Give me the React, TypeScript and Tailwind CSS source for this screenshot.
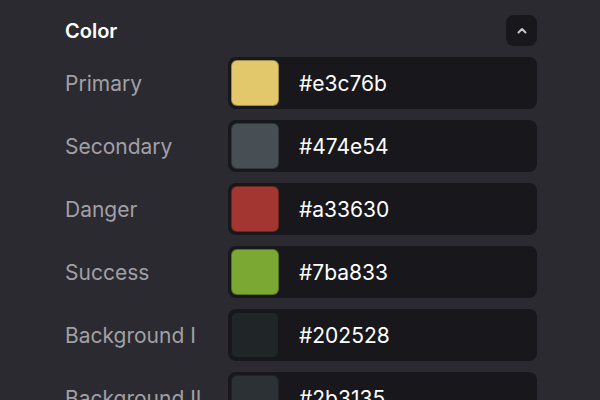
import React from "react";

const rows = [
  { label: "Primary", hex: "#e3c76b" },
  { label: "Secondary", hex: "#474e54" },
  { label: "Danger", hex: "#a33630" },
  { label: "Success", hex: "#7ba833" },
  { label: "Background I", hex: "#202528" },
  { label: "Background II", hex: "#2b3135" },
];

export default function App() {
  return (
    <div
      className="w-[600px] h-[400px] overflow-hidden bg-[#2b2a30] pl-[65px] pr-[63px] pt-[15px]"
      style={{ fontFamily: "Inter, 'Noto Sans', sans-serif" }}
    >
      <div className="flex items-center justify-between h-[31px]">
        <span className="text-[20px] font-semibold text-white">Color</span>
        <button className="w-[31px] h-[31px] rounded-[8px] bg-[#18171c] flex items-center justify-center">
          <svg width="10" height="7" viewBox="0 0 10 7" fill="none">
            <path d="M1.5 5.5 L5 2 L8.5 5.5" stroke="#c8c8cc" strokeWidth="2" strokeLinecap="round" strokeLinejoin="round" />
          </svg>
        </button>
      </div>
      <div className="mt-[11px] flex flex-col gap-[11px]">
        {rows.map((r) => (
          <div key={r.label} className="flex items-center">
            <div className="w-[163px] text-[21px] leading-none text-[#a1a0a6] whitespace-nowrap">{r.label}</div>
            <div className="flex-1 h-[52px] rounded-[8px] bg-[#18171c] flex items-center pl-[3px]">
              <div
                className="w-[48px] h-[46px] rounded-[6px] border border-black/30"
                style={{ backgroundColor: r.hex }}
              />
              <span className="ml-[20px] text-[21px] leading-none text-white">{r.hex}</span>
            </div>
          </div>
        ))}
      </div>
    </div>
  );
}
